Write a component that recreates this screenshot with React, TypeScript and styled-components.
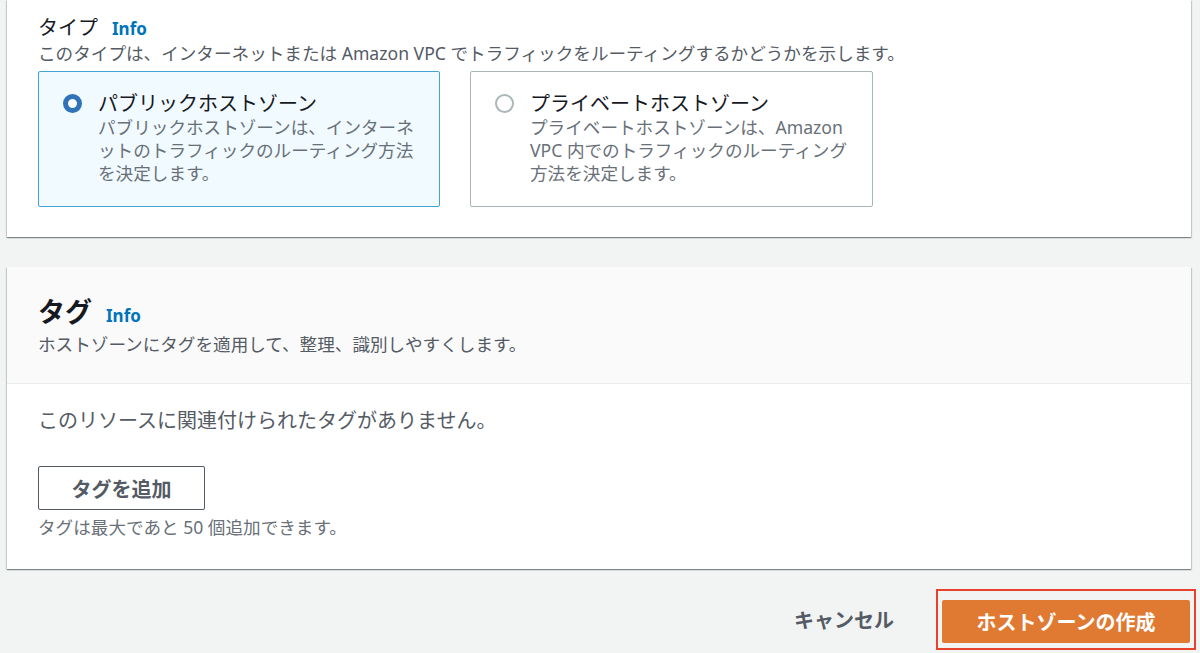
import React from 'react';
import styled, { createGlobalStyle, css } from 'styled-components';

const GlobalStyle = createGlobalStyle`
  html, body {
    margin: 0;
    padding: 0;
    background: #f2f3f3;
  }
  body {
    font-family: "Noto Sans", "Noto Sans CJK JP", sans-serif;
    color: #16191f;
  }
`;

const Page = styled.div`
  height: 653px;
  overflow: hidden;
  padding: 0 9px 0 7px;
  box-sizing: border-box;
  display: flex;
  flex-direction: column;
`;

const Card = styled.section`
  background: #fff;
  box-shadow: 0 1px 1px 0 rgba(0, 28, 36, 0.3), 1px 1px 1px 0 rgba(0, 28, 36, 0.15),
    -1px 1px 1px 0 rgba(0, 28, 36, 0.15);
  & + & {
    margin-top: 30px;
  }
`;

const CardBody = styled.div<{ pad?: string }>`
  padding: ${({ pad }) => pad || '0 31px'};
`;

const CardHeader = styled.header`
  background: #fafafa;
  border-bottom: 1px solid #eaeded;
  padding: 29px 31px 27px;

  p {
    margin-top: 4px;
  }
`;

const LabelRow = styled.div`
  display: flex;
  align-items: baseline;
  gap: 14px;
`;

const Label = styled.span<{ big?: boolean }>`
  ${({ big }) => big
    ? css`
        font-size: 27px;
        font-weight: 700;
        line-height: 32px;
        color: #16191f;
      `
    : css`
        font-size: 20px;
        line-height: 26px;
        color: #16191f;
      `}
`;

const InfoLink = styled.a`
  color: #0073bb;
  font-weight: 700;
  font-size: 17px;
  text-decoration: none;
`;

const Description = styled.p`
  margin: 0;
  font-size: 17.6px;
  line-height: 24px;
  color: #545b64;
`;

const TileGrid = styled.div`
  display: grid;
  grid-template-columns: 402px 403px;
  gap: 30px;
  margin-top: 6px;
`;

const Tile = styled.label<{ selected?: boolean }>`
  display: flex;
  gap: 16px;
  height: 136px;
  box-sizing: border-box;
  padding: 19px 20px 16px 24px;
  border-radius: 2px;
  border: 1px solid ${({ selected }) => (selected ? '#44a3d6' : '#aab7b8')};
  background: ${({ selected }) => (selected ? '#f1faff' : '#fff')};
`;

const Radio = styled.span<{ checked?: boolean }>`
  flex: none;
  width: 19px;
  height: 19px;
  margin-top: 3px;
  border-radius: 50%;
  box-sizing: border-box;
  ${({ checked }) => checked
    ? css`
        border: 5px solid #2f73b8;
        background: #fff;
      `
    : css`
        border: 2px solid #aab7b8;
        background: #fff;
      `}
`;

const TileText = styled.div`
  display: flex;
  flex-direction: column;
`;

const TileTitle = styled.span`
  font-size: 20px;
  line-height: 25px;
  color: #16191f;
`;

const TileDesc = styled.span`
  font-size: 17.6px;
  line-height: 23px;
  color: #687078;
`;

const EmptyText = styled.p`
  margin: 0;
  font-size: 20px;
  line-height: 28px;
  color: #545b64;
`;

const SecondaryButton = styled.button`
  display: block;
  margin-top: 31px;
  width: 167px;
  height: 44px;
  border: 1px solid #545b64;
  border-radius: 2px;
  background: #fff;
  color: #545b64;
  font-family: inherit;
  font-size: 20px;
  font-weight: 700;
  padding: 0;
`;

const Hint = styled.p`
  margin: 6px 0 0;
  font-size: 17.6px;
  line-height: 22px;
  color: #687078;
`;

const Footer = styled.footer`
  display: flex;
  justify-content: flex-end;
  align-items: center;
  margin-top: 20px;
  margin-right: -5px;
  gap: 22px;
`;

const LinkButton = styled.button`
  border: none;
  background: none;
  font-family: inherit;
  font-size: 20px;
  font-weight: 700;
  color: #545b64;
  padding: 0 20px;
`;

const Highlight = styled.div`
  border: 2px solid #e8412c;
  padding: 9px 4px 5px;
`;

const PrimaryButton = styled.button`
  display: block;
  width: 248px;
  height: 43px;
  border: none;
  border-radius: 2px;
  background: #e07a33;
  color: #fff;
  font-family: inherit;
  font-size: 20px;
  font-weight: 700;
  padding: 0;
`;

const tiles = [
  {
    title: 'パブリックホストゾーン',
    desc: 'パブリックホストゾーンは、インターネットのトラフィックのルーティング方法を決定します。',
    selected: true,
  },
  {
    title: 'プライベートホストゾーン',
    desc: 'プライベートホストゾーンは、Amazon VPC 内でのトラフィックのルーティング方法を決定します。',
    selected: false,
  },
];

export default function App() {
  return (
    <>
      <GlobalStyle />
      <Page>
        <Card>
          <CardBody pad="15px 31px 30px">
            <LabelRow>
              <Label>タイプ</Label>
              <InfoLink href="#">Info</InfoLink>
            </LabelRow>
            <Description>
              このタイプは、インターネットまたは Amazon VPC でトラフィックをルーティングするかどうかを示します。
            </Description>
            <TileGrid>
              {tiles.map((t) => (
                <Tile key={t.title} selected={t.selected}>
                  <Radio checked={t.selected} />
                  <TileText>
                    <TileTitle>{t.title}</TileTitle>
                    <TileDesc>{t.desc}</TileDesc>
                  </TileText>
                </Tile>
              ))}
            </TileGrid>
          </CardBody>
        </Card>
        <Card>
          <CardHeader>
            <LabelRow>
              <Label big>タグ</Label>
              <InfoLink href="#">Info</InfoLink>
            </LabelRow>
            <Description>ホストゾーンにタグを適用して、整理、識別しやすくします。</Description>
          </CardHeader>
          <CardBody pad="23px 31px 31px">
            <EmptyText>このリソースに関連付けられたタグがありません。</EmptyText>
            <SecondaryButton>タグを追加</SecondaryButton>
            <Hint>タグは最大であと 50 個追加できます。</Hint>
          </CardBody>
        </Card>
        <Footer>
          <LinkButton>キャンセル</LinkButton>
          <Highlight>
            <PrimaryButton>ホストゾーンの作成</PrimaryButton>
          </Highlight>
        </Footer>
      </Page>
    </>
  );
}
